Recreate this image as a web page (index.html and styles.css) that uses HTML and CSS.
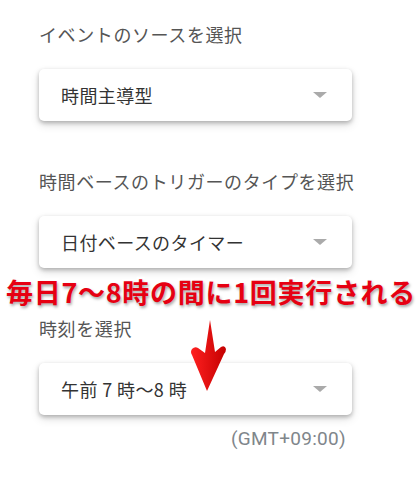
FILE: index.html
```html
<!DOCTYPE html>
<html lang="ja">
<head>
    <meta charset="UTF-8">
    <title>トリガーを追加</title>
    <link rel="stylesheet" href="styles.css">
</head>
<body>
    <div class="panel">
        <div class="field first">
            <div class="label">イベントのソースを選択</div>
            <div class="select">
                <span class="value">時間主導型</span>
                <span class="caret"></span>
            </div>
        </div>

        <div class="field">
            <div class="label">時間ベースのトリガーのタイプを選択</div>
            <div class="select">
                <span class="value">日付ベースのタイマー</span>
                <span class="caret"></span>
            </div>
        </div>

        <div class="field">
            <div class="label">時刻を選択</div>
            <div class="select">
                <span class="value">午前 7 時～8 時</span>
                <span class="caret"></span>
            </div>
            <div class="tz">(GMT+09:00)</div>
        </div>
    </div>

    <!-- annotation overlay -->
    <div class="note">毎日7～8時の間に1回実行される</div>
    <svg class="arrow" width="46" height="80" viewBox="0 0 46 80">
        <defs>
            <linearGradient id="arrowFill" x1="0" y1="0" x2="1" y2="0">
                <stop offset="0" stop-color="#ff2020"/>
                <stop offset="1" stop-color="#c40000"/>
            </linearGradient>
        </defs>
        <path d="M24 4 L29 36 L35 31 Q39 29 40 33 Q40 36 38 38 L21 75 L6 39 Q4 36 6 33 Q9 30 12 32 L19 37 Z" fill="url(#arrowFill)"/>
    </svg>
</body>
</html>
```

FILE: styles.css
```css
body {
    margin: 0;
    background-color: #fff;
    font-family: 'Noto Sans CJK JP', 'Noto Sans', sans-serif;
    color: #333;
}

.panel {
    padding: 22px 0 0 39px;
    width: 313px;
}

.field {
    margin-top: 48px;
}

.field.first {
    margin-top: 0;
}

.label {
    font-size: 18px;
    line-height: 24px;
    letter-spacing: 0.6px;
    color: #555;
    margin-bottom: 23px;
    white-space: nowrap;
}

.select {
    height: 52px;
    background-color: #fff;
    border-radius: 5px;
    box-shadow: 0 2px 4px rgba(0,0,0,0.25), 0 4px 10px rgba(0,0,0,0.12);
    display: flex;
    align-items: center;
    justify-content: space-between;
    padding: 0 25px 0 22px;
}

.value {
    font-size: 18px;
    letter-spacing: 0.4px;
    color: #333;
}

.caret {
    width: 0;
    height: 0;
    border-left: 7px solid transparent;
    border-right: 7px solid transparent;
    border-top: 6px solid #aaa;
}

.tz {
    text-align: right;
    padding-right: 6px;
    margin-top: 12px;
    font-family: Roboto, 'Noto Sans', sans-serif;
    font-size: 19px;
    letter-spacing: 0.3px;
    color: #80868b;
}

.note {
    position: absolute;
    left: 6px;
    top: 274px;
    font-size: 27px;
    font-weight: 700;
    line-height: 36px;
    letter-spacing: 0.7px;
    color: #e60012;
    -webkit-text-stroke: 5px #fff;
    paint-order: stroke fill;
    text-shadow: 1px 2px 3px rgba(0,0,0,0.35);
    white-space: nowrap;
}

.arrow {
    position: absolute;
    left: 186px;
    top: 316px;
}
```
